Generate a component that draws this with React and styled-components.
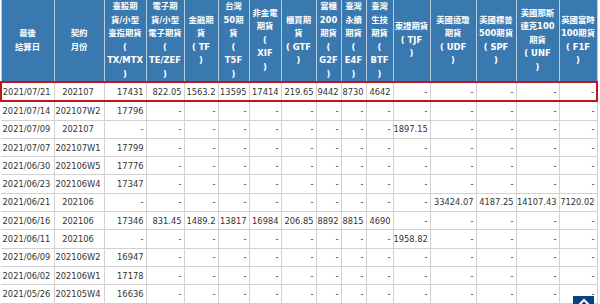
import React from "react";
import styled, { createGlobalStyle } from "styled-components";

const GlobalStyle = createGlobalStyle`
  html, body { margin: 0; padding: 0; background: #ffffff; }
  body { width: 600px; height: 304px; overflow: hidden; }
`;

const Page = styled.div`
  position: relative;
  width: 600px;
  height: 304px;
  overflow: hidden;
  background: #fff;
`;

const Table = styled.table`
  border-collapse: collapse;
  table-layout: fixed;
  width: 597px;
  font-family: "DejaVu Sans", "Noto Sans CJK TC", sans-serif;
`;

const HeadCell = styled.th`
  background: #3a79b0;
  color: #ffffff;
  font-size: 8.4px;
  font-weight: bold;
  line-height: 13.5px;
  text-align: center;
  vertical-align: middle;
  white-space: nowrap;
  padding: 0;
  height: 81px;
  border: 1px solid #b9cde0;
  border-top: none;
  overflow: hidden;
`;

const Cell = styled.td`
  height: 17.3px;
  padding: 0 2px 0 0;
  font-size: 8.3px;
  color: #333;
  white-space: nowrap;
  overflow: hidden;
  text-align: ${(p) => p.$align};
  border: 1px solid #d2d2d2;
  ${(p) => (p.$hl ? "border-top: 2px solid #c0121f; border-bottom: 2px solid #c0121f;" : "")}
  ${(p) => (p.$hl && p.$first ? "border-left: 2px solid #c0121f;" : "")}
  ${(p) => (p.$hl && p.$last ? "border-right: 2px solid #c0121f;" : "")}
  ${(p) => (p.$first && !p.$hl ? "border-left-color: transparent;" : "")}
`;

const ToTop = styled.div`
  position: fixed;
  left: 573px;
  top: 296px;
  width: 21px;
  height: 21px;
  background: #0f3f80;
  display: flex;
  justify-content: center;
  padding-top: 2px;
  box-sizing: border-box;
`;

const widths = [53, 50, 42, 38, 34, 31, 32, 35, 25, 25, 27, 37, 46, 40, 43, 38];

const headers = [
  ["最後", "結算日"],
  ["契約", "月份"],
  ["臺股期", "貨/小型", "臺指期貨", "(", "TX/MTX", ")"],
  ["電子期", "貨/小型", "電子期貨", "(", "TE/ZEF", ")"],
  ["金融期", "貨", "( TF", ")"],
  ["台灣", "50期", "貨", "(", "T5F", ")"],
  ["非金電", "期貨", "(", "XIF", ")"],
  ["櫃買期", "貨", "( GTF", ")"],
  ["富櫃", "200", "期貨", "(", "G2F", ")"],
  ["臺灣", "永續", "期貨", "(", "E4F", ")"],
  ["臺灣", "生技", "期貨", "(", "BTF", ")"],
  ["東證期貨", "( TJF", ")"],
  ["美國道瓊", "期貨", "( UDF", ")"],
  ["美國標普", "500期貨", "( SPF", ")"],
  ["美國那斯", "達克100", "期貨", "( UNF", ")"],
  ["英國富時", "100期貨", "( F1F", ")"],
];

const d = "-";
const dashes = (n) => Array(n).fill(d);

const rows = [
  ["2021/07/21", "202107", "17431", "822.05", "1563.2", "13595", "17414", "219.65", "9442", "8730", "4642", ...dashes(5)],
  ["2021/07/14", "202107W2", "17796", ...dashes(13)],
  ["2021/07/09", "202107", ...dashes(9), "1897.15", ...dashes(4)],
  ["2021/07/07", "202107W1", "17799", ...dashes(13)],
  ["2021/06/30", "202106W5", "17776", ...dashes(13)],
  ["2021/06/23", "202106W4", "17347", ...dashes(13)],
  ["2021/06/21", "202106", ...dashes(10), "33424.07", "4187.25", "14107.43", "7120.02"],
  ["2021/06/16", "202106", "17346", "831.45", "1489.2", "13817", "16984", "206.85", "8892", "8815", "4690", ...dashes(5)],
  ["2021/06/11", "202106", ...dashes(9), "1958.82", ...dashes(4)],
  ["2021/06/09", "202106W2", "16947", ...dashes(13)],
  ["2021/06/02", "202106W1", "17178", ...dashes(13)],
  ["2021/05/26", "202105W4", "16636", ...dashes(13)],
];

export default function App() {
  return (
    <Page>
      <GlobalStyle />
      <Table>
        <colgroup>
          {widths.map((w, i) => (
            <col key={i} style={{ width: w }} />
          ))}
        </colgroup>
        <thead>
          <tr>
            {headers.map((lines, i) => (
              <HeadCell key={i}>
                {lines.map((l, j) => (
                  <React.Fragment key={j}>
                    {j > 0 && <br />}
                    {l}
                  </React.Fragment>
                ))}
              </HeadCell>
            ))}
          </tr>
        </thead>
        <tbody>
          {rows.map((r, ri) => (
            <tr key={ri}>
              {r.map((v, ci) => (
                <Cell
                  key={ci}
                  $align={ci < 2 ? "center" : "right"}
                  $hl={ri === 0}
                  $first={ci === 0}
                  $last={ci === r.length - 1}
                >
                  {v}
                </Cell>
              ))}
            </tr>
          ))}
        </tbody>
      </Table>
      <ToTop>
        <svg width="12" height="8" viewBox="0 0 12 8">
          <path d="M1.5 6.5 L6 2 L10.5 6.5" fill="none" stroke="#fff" strokeWidth="2" />
        </svg>
      </ToTop>
    </Page>
  );
}
